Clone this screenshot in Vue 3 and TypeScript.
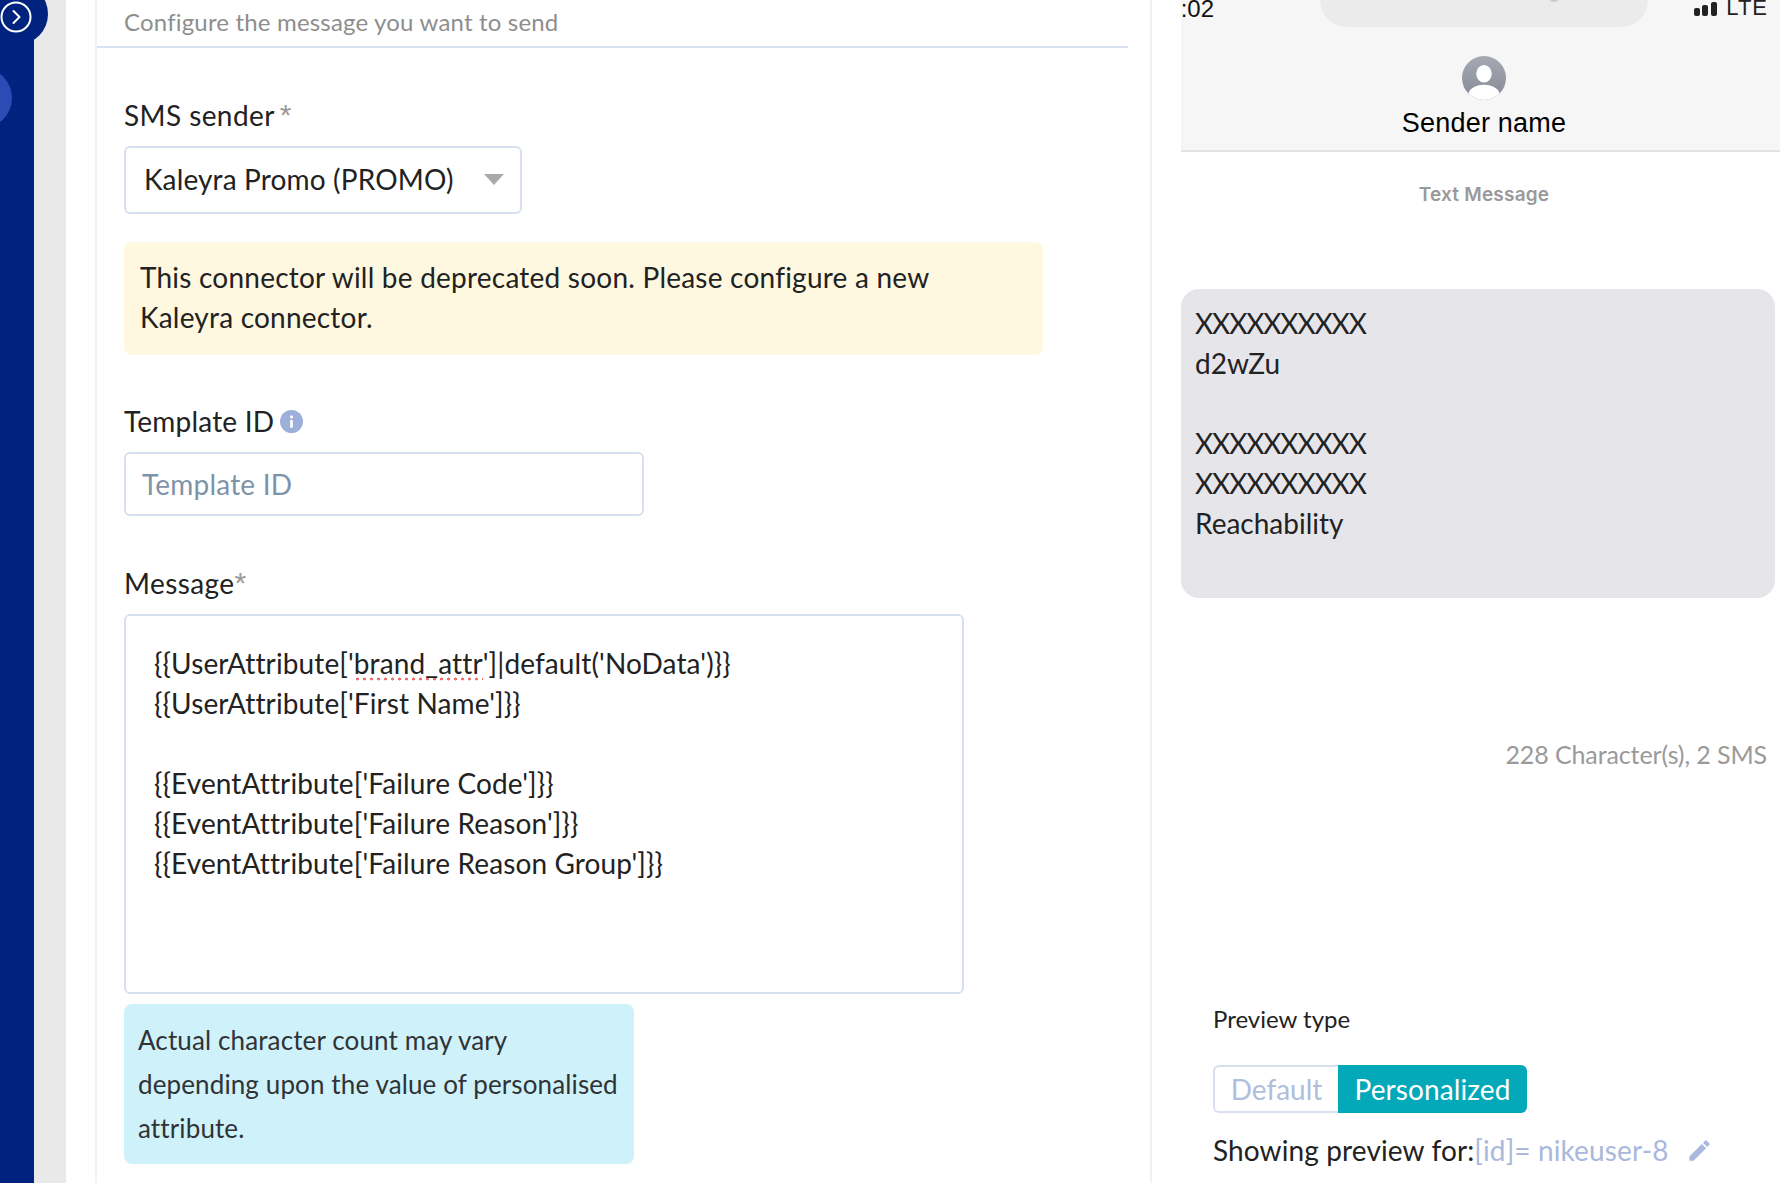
<script setup lang="ts">
const msgStart = "{{UserAttribute['"
const msgEnd = "']|default('NoData')}}"
const messageLines: string[] = [
  "{{UserAttribute['First Name']}}",
  '',
  "{{EventAttribute['Failure Code']}}",
  "{{EventAttribute['Failure Reason']}}",
  "{{EventAttribute['Failure Reason Group']}}",
]
const bubbleLines: string[] = ['XXXXXXXXXX', 'd2wZu', '', 'XXXXXXXXXX', 'XXXXXXXXXX', 'Reachability']
</script>

<template>
  <div class="page">
    <aside class="rail">
      <div class="rail-bump">
        <svg class="rail-toggle" width="32" height="32" viewBox="0 0 32 32" fill="none">
          <circle cx="16" cy="16" r="14.5" stroke="#fff" stroke-width="2" />
          <path d="M13.5 10l6 6-6 6" stroke="#fff" stroke-width="2" stroke-linecap="round" stroke-linejoin="round" />
        </svg>
      </div>
      <div class="rail-item"></div>
    </aside>
    <div class="gutter"></div>
    <main class="form-pane">
      <header class="form-head">Configure the message you want to send</header>
      <section class="form-body">
        <div class="label first-label">SMS sender<span class="req gap">*</span></div>
        <div class="select">
          <span>Kaleyra Promo (PROMO)</span>
          <span class="caret"></span>
        </div>
        <div class="warn">This connector will be deprecated soon. Please configure a new<br />Kaleyra connector.</div>

        <div class="label with-icon template-label">
          Template ID
          <svg width="23" height="23" viewBox="0 0 24 24">
            <circle cx="12" cy="12" r="12" fill="#9db0da" />
            <circle cx="12" cy="7.2" r="1.6" fill="#fff" />
            <rect x="10.6" y="10.4" width="2.8" height="8" rx="0.6" fill="#fff" />
          </svg>
        </div>
        <div class="text-input">Template ID</div>

        <div class="label message-label">Message<span class="req">*</span></div>
        <div class="message">
          <div class="msg-line">{{ msgStart }}<span class="spell">brand_attr</span>{{ msgEnd }}</div>
          <div v-for="(line, i) in messageLines" :key="i" class="msg-line">{{ line }}</div>
        </div>
        <div class="note">Actual character count may vary<br />depending upon the value of personalised<br />attribute.</div>
      </section>
    </main>
    <section class="preview">
      <div class="phone-head">
        <div class="status">
          <div class="time">9:02</div>
          <div class="notch"><span class="lens"></span></div>
          <div class="signal">
            <span class="bar b1"></span><span class="bar b2"></span><span class="bar b3"></span>
            <span class="lte">LTE</span>
          </div>
        </div>
        <svg class="avatar" width="44" height="44" viewBox="0 0 42 42">
          <defs>
            <linearGradient id="avatarFill" x1="0" y1="0" x2="0" y2="1">
              <stop offset="0" stop-color="#a6a9b3" />
              <stop offset="1" stop-color="#868a96" />
            </linearGradient>
            <clipPath id="avatarClip"><circle cx="21" cy="21" r="21" /></clipPath>
          </defs>
          <circle cx="21" cy="21" r="21" fill="url(#avatarFill)" />
          <g clip-path="url(#avatarClip)" fill="#fff">
            <ellipse cx="21" cy="17" rx="7.4" ry="8.4" />
            <ellipse cx="21" cy="37" rx="15" ry="9.5" />
          </g>
        </svg>
        <div class="sender">Sender name</div>
      </div>
      <div class="kind">Text Message</div>
      <div class="bubble">
        <div
          v-for="(line, i) in bubbleLines"
          :key="i"
          class="bubble-line"
          :class="{ masked: line.startsWith('XX') }"
        >{{ line }}</div>
      </div>
      <div class="count">228 Character(s), 2 SMS</div>
      <div class="preview-controls">
        <div class="ptype">Preview type</div>
        <div class="toggle">
          <span class="opt">Default</span>
          <span class="opt on">Personalized</span>
        </div>
        <div class="showing">
          <span>Showing preview for:</span><span class="pid">[id]= nikeuser-8</span>
          <svg class="pencil" width="27" height="27" viewBox="0 0 24 24" fill="#a9b8dc">
            <path d="M3 17.25V21h3.75L17.81 9.94l-3.75-3.75L3 17.25zM20.71 7.04a1 1 0 0 0 0-1.41l-2.34-2.34a1 1 0 0 0-1.41 0l-1.83 1.83 3.75 3.75 1.83-1.83z" />
          </svg>
        </div>
      </div>
    </section>
  </div>
</template>

<style>
html, body { margin: 0; background: #fff; }
</style>

<style scoped>
.page {
  display: flex;
  width: 1780px;
  height: 1183px;
  overflow: hidden;
  font-family: Lato, "Open Sans", sans-serif;
  color: #222;
  background: #fff;
}
.rail { position: relative; width: 34px; flex: none; background: #00237f; }
.rail-bump {
  position: absolute; left: -10px; top: -16px; width: 58px; height: 60px;
  border-radius: 50%; background: #00237f;
}
.rail-toggle { position: absolute; left: 10px; top: 17px; }
.rail-item {
  position: absolute; left: -48px; top: 68px; width: 60px; height: 60px;
  border-radius: 50%; background: #2a4cb4;
}
.gutter { width: 32px; flex: none; background: #e9e9e9; }
.form-pane {
  width: 1057px; flex: none; margin-left: 29px;
  border-left: 2px solid #eef1f8; border-right: 2px solid #eef1f8;
  box-sizing: border-box;
}
.form-head {
  width: 1031px; height: 48px; box-sizing: border-box;
  padding-left: 27px; border-bottom: 2px solid #d9e2f0;
  font-size: 24px; line-height: 44px; letter-spacing: 0.18px; color: #8e8e8e;
}
.form-body { padding-left: 27px; }
.label { font-size: 28px; line-height: 30px; margin-top: 53px; color: #222; letter-spacing: 0.4px; }
.first-label { margin-top: 52px; }
.template-label { margin-top: 51px; letter-spacing: 0.2px; }
.message-label { margin-top: 52px; }
.with-icon { display: flex; align-items: center; gap: 6px; }
.req { display: inline-block; height: 20px; font: 30px/30px "Liberation Sans", sans-serif; vertical-align: top; color: #999; }
.gap { margin-left: 5px; }
.select {
  display: flex; align-items: center; justify-content: space-between;
  width: 398px; height: 68px; box-sizing: border-box; margin-top: 16px;
  padding: 0 16px 2px 18px; border: 2px solid #d8e0f0; border-radius: 6px;
  font-size: 28px; letter-spacing: 0.15px;
}
.caret {
  width: 0; height: 0; border-left: 10px solid transparent; border-right: 10px solid transparent;
  border-top: 11px solid #aaa;
}
.warn {
  width: 919px; height: 113px; box-sizing: border-box; margin-top: 28px;
  padding: 15px 16px; background: #fef8e0; border-radius: 8px;
  font-size: 28px; line-height: 40px; letter-spacing: 0.22px; white-space: nowrap;
}
.text-input {
  display: flex; align-items: center;
  width: 520px; height: 64px; box-sizing: border-box; margin-top: 16px;
  padding-left: 16px; border: 2px solid #d8e0f0; border-radius: 6px;
  font-size: 28px; letter-spacing: 0.2px; color: #7f93a8;
}
.message {
  width: 840px; height: 380px; box-sizing: border-box; margin-top: 16px;
  padding: 27px 28px; border: 2px solid #d8e0f0; border-radius: 6px;
  font-size: 28px; letter-spacing: 0.12px;
}
.msg-line { height: 40px; line-height: 40px; white-space: pre; }
.spell {
  padding-bottom: 1px;
  background-image: radial-gradient(circle, #f26d6d 1.3px, transparent 1.7px);
  background-size: 7px 4px;
  background-repeat: repeat-x;
  background-position: 0 100%;
}
.note {
  width: 510px; height: 160px; box-sizing: border-box; margin-top: 10px;
  padding: 14px 14px 0; background: #cff1fa; border-radius: 8px;
  font-size: 26px; line-height: 44px; letter-spacing: 0.12px; color: #2f3336; white-space: nowrap;
}
.preview { flex: 1; padding-left: 29px; min-width: 0; }
.phone-head {
  display: flex; flex-direction: column; align-items: center;
  height: 152px; box-sizing: border-box; overflow: hidden;
  background: #f6f6f6; border-bottom: 2px solid #e3e3e3;
}
.status { position: relative; display: grid; grid-template-columns: 33px 106px 328px 1fr; width: 100%; height: 27px; flex: none; }
.time {
  grid-column: 1; display: flex; justify-content: flex-end; margin-top: -3px;
  font: 24px/24px "Liberation Sans", sans-serif; color: #111; white-space: nowrap;
}
.notch {
  position: relative; grid-column: 3; height: 27px; background: #ebebeb;
  border-radius: 0 0 32px 32px; overflow: hidden;
}
.lens { position: absolute; left: 229px; top: -6px; width: 10px; height: 8px; border-radius: 50%; background: #c9c9c9; }
.signal {
  grid-column: 4; display: flex; align-items: flex-end; justify-content: flex-end; gap: 2.5px;
  height: 16px; padding-right: 12px;
}
.bar { width: 6px; background: #222; border-radius: 2px; }
.b1 { height: 8px; }
.b2 { height: 11px; }
.b3 { height: 14px; }
.lte { margin-left: 7px; font: 22px/22px "Liberation Sans", sans-serif; letter-spacing: 1px; color: #222; transform: translateY(3px); }
.avatar { margin: 29px 0 0 7px; flex: none; }
.sender { margin: 5px 0 0 7px; font: 27px/36px "Liberation Sans", sans-serif; letter-spacing: 0.2px; color: #000; }
.kind {
  margin-top: 31px; padding-left: 7px; text-align: center;
  font: 600 19px/24px Inter, sans-serif; letter-spacing: 0.2px; color: #999;
}
.bubble {
  width: 594px; height: 309px; box-sizing: border-box; margin-top: 82px;
  padding: 14px 14px; background: #e5e5ea; border-radius: 18px;
  font-size: 28px;
}
.bubble-line { height: 40px; line-height: 40px; }
.masked { letter-spacing: -1.1px; }
.count {
  margin-top: 141px; padding-right: 13px; text-align: right;
  font-size: 25px; line-height: 30px; letter-spacing: -0.1px; color: #9a9a9a;
}
.preview-controls { margin-top: 235px; padding-left: 32px; }
.ptype { font-size: 24px; line-height: 30px; color: #222; }
.toggle {
  display: flex; width: 314px; height: 48px; margin-top: 31px;
  font-size: 28px; line-height: 44px;
}
.opt {
  flex: 1; box-sizing: border-box; text-align: center; color: #afbedd;
  border: 2px solid #d8e0f0; border-right: 0; border-radius: 6px 0 0 6px;
}
.on {
  flex: none; width: 189px; color: #fff; background: #03a9b8; border: 0;
  border-radius: 0 6px 6px 0; line-height: 48px; letter-spacing: 0.1px;
}
.showing { display: flex; align-items: center; height: 36px; margin-top: 19px; font-size: 28px; letter-spacing: 0.12px; white-space: nowrap; }
.pid { color: #a9b8dc; }
.pencil { margin-left: 17px; }
</style>
